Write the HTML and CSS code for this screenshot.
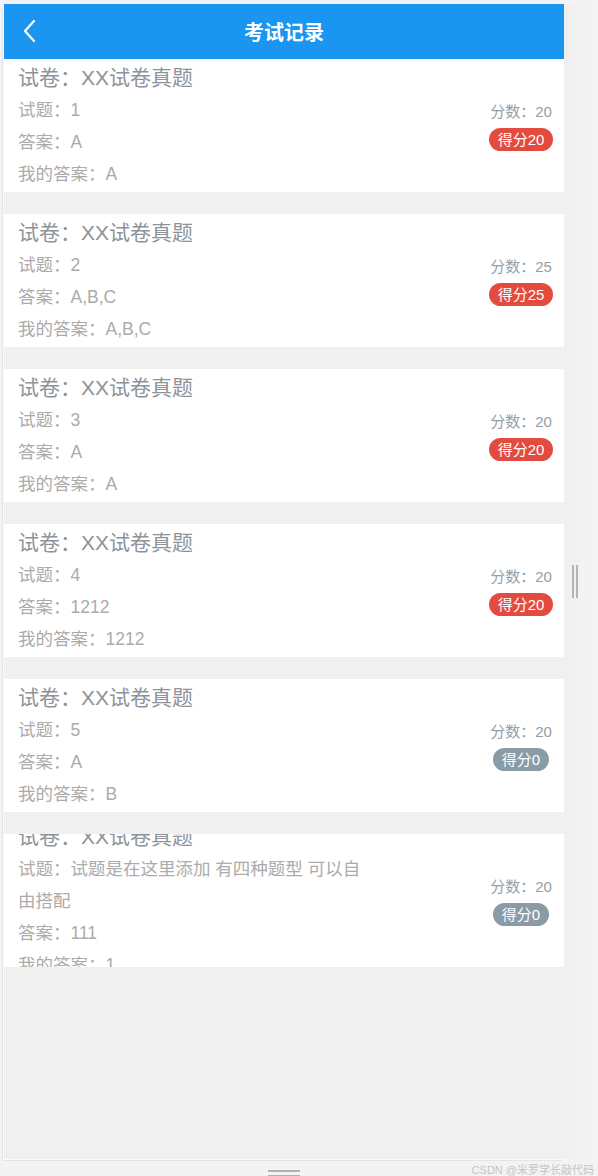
FILE: index.html
```html
<!DOCTYPE html>
<html lang="zh">
<head>
<meta charset="utf-8">
<title>考试记录</title>
<link rel="stylesheet" href="styles.css">
</head>
<body>
<div class="screen">
  <div class="main">
    <div class="device">
      <header class="nav">
        <span class="back"><svg width="14" height="24" viewBox="0 0 14 24"><path d="M12 2 L3 12 L12 22" fill="none" stroke="#fff" stroke-width="2.2" stroke-linecap="round" stroke-linejoin="round"/></svg></span>
        <h1 class="nav-title">考试记录</h1>
        <span class="nav-spacer"></span>
      </header>
      <div class="list">
        <div class="card">
          <div class="info">
            <div class="title">试卷：XX试卷真题</div>
            <div class="line">试题：1</div>
            <div class="line">答案：A</div>
            <div class="line">我的答案：A</div>
          </div>
          <div class="score">
            <div class="total">分数：20</div>
            <div class="badge red">得分20</div>
          </div>
        </div>
        <div class="card">
          <div class="info">
            <div class="title">试卷：XX试卷真题</div>
            <div class="line">试题：2</div>
            <div class="line">答案：A,B,C</div>
            <div class="line">我的答案：A,B,C</div>
          </div>
          <div class="score">
            <div class="total">分数：25</div>
            <div class="badge red">得分25</div>
          </div>
        </div>
        <div class="card">
          <div class="info">
            <div class="title">试卷：XX试卷真题</div>
            <div class="line">试题：3</div>
            <div class="line">答案：A</div>
            <div class="line">我的答案：A</div>
          </div>
          <div class="score">
            <div class="total">分数：20</div>
            <div class="badge red">得分20</div>
          </div>
        </div>
        <div class="card">
          <div class="info">
            <div class="title">试卷：XX试卷真题</div>
            <div class="line">试题：4</div>
            <div class="line">答案：1212</div>
            <div class="line">我的答案：1212</div>
          </div>
          <div class="score">
            <div class="total">分数：20</div>
            <div class="badge red">得分20</div>
          </div>
        </div>
        <div class="card">
          <div class="info">
            <div class="title">试卷：XX试卷真题</div>
            <div class="line">试题：5</div>
            <div class="line">答案：A</div>
            <div class="line">我的答案：B</div>
          </div>
          <div class="score">
            <div class="total">分数：20</div>
            <div class="badge gray">得分0</div>
          </div>
        </div>
        <div class="card">
          <div class="info">
            <div class="title">试卷：XX试卷真题</div>
            <div class="line">试题：试题是在这里添加 有四种题型 可以自由搭配</div>
            <div class="line">答案：111</div>
            <div class="line">我的答案：1</div>
          </div>
          <div class="score">
            <div class="total">分数：20</div>
            <div class="badge gray">得分0</div>
          </div>
        </div>
      </div>
    </div>
    <div class="gutter">
      <span class="vgrip"></span>
    </div>
  </div>
  <div class="footer">
    <span class="hgrip"></span>
    <span class="watermark">CSDN @米罗学长敲代码</span>
  </div>
</div>
</body>
</html>
```
FILE: styles.css
```css
html, body {
  margin: 0;
  padding: 0;
}
body {
  width: 598px;
  height: 1176px;
  overflow: hidden;
  background: #f3f3f3;
  font-family: "Liberation Sans", "Noto Sans CJK SC", sans-serif;
}
.screen {
  display: flex;
  flex-direction: column;
  height: 1176px;
}
.main {
  display: flex;
  padding: 4px 0 0 4px;
  height: 1155px;
}
.device {
  width: 560px;
  height: 1155px;
  background: #f0f0f0;
  display: flex;
  flex-direction: column;
  overflow: hidden;
  box-shadow: -1px 1px 0 #fbfbfb, -2px 2px 0 #e4e4e4;
}
.nav {
  height: 55px;
  flex: none;
  background: #1a96f0;
  display: flex;
  align-items: center;
  padding: 0 14px;
}
.back {
  width: 30px;
  display: flex;
  align-items: center;
  padding-left: 4px;
  margin-top: -1px;
}
.nav-title {
  flex: 1;
  margin: 0;
  text-align: center;
  color: #fff;
  font-size: 20px;
  font-weight: bold;
  padding-right: 4px;
}
.nav-spacer {
  width: 30px;
}
.list {
  display: flex;
  flex-direction: column;
  gap: 22px;
}
.card {
  height: 133px;
  flex: none;
  background: #fff;
  display: flex;
  align-items: center;
  overflow: hidden;
  padding: 0 10px 0 14px;
}
.info {
  flex: 1;
  min-width: 0;
}
.info .title,
.info .line {
  width: 346px;
  line-height: 32px;
}
.title {
  font-size: 21px;
  color: #8d9399;
}
.line {
  font-size: 17.5px;
  color: #ababab;
}
.score {
  display: flex;
  flex-direction: column;
  align-items: center;
  gap: 5px;
  width: 66px;
}
.total {
  font-size: 15px;
  color: #939ea8;
  line-height: 22px;
}
.badge {
  height: 23px;
  line-height: 23px;
  border-radius: 12px;
  color: #fff;
  font-size: 15px;
  padding: 0 8.5px;
}
.badge.red {
  background: #e44b3f;
}
.badge.gray {
  background: #8a9ba8;
}
.gutter {
  flex: 1;
  display: flex;
  align-items: center;
  padding-left: 8px;
  background: linear-gradient(to right, #efefef, #f5f5f5);
}
.vgrip {
  width: 2px;
  height: 33px;
  border-left: 2px solid #b4b4b4;
  border-right: 2px solid #b4b4b4;
}
.footer {
  flex: 1;
  display: flex;
  align-items: center;
}
.hgrip {
  margin-left: 268px;
  width: 32px;
  height: 3px;
  border-top: 2px solid #b0b0b0;
  border-bottom: 2px solid #b0b0b0;
  margin-top: 10px;
}
.watermark {
  margin-left: auto;
  margin-right: 4px;
  font-size: 11px;
  color: #c4c4c4;
  margin-top: 2px;
}
```
